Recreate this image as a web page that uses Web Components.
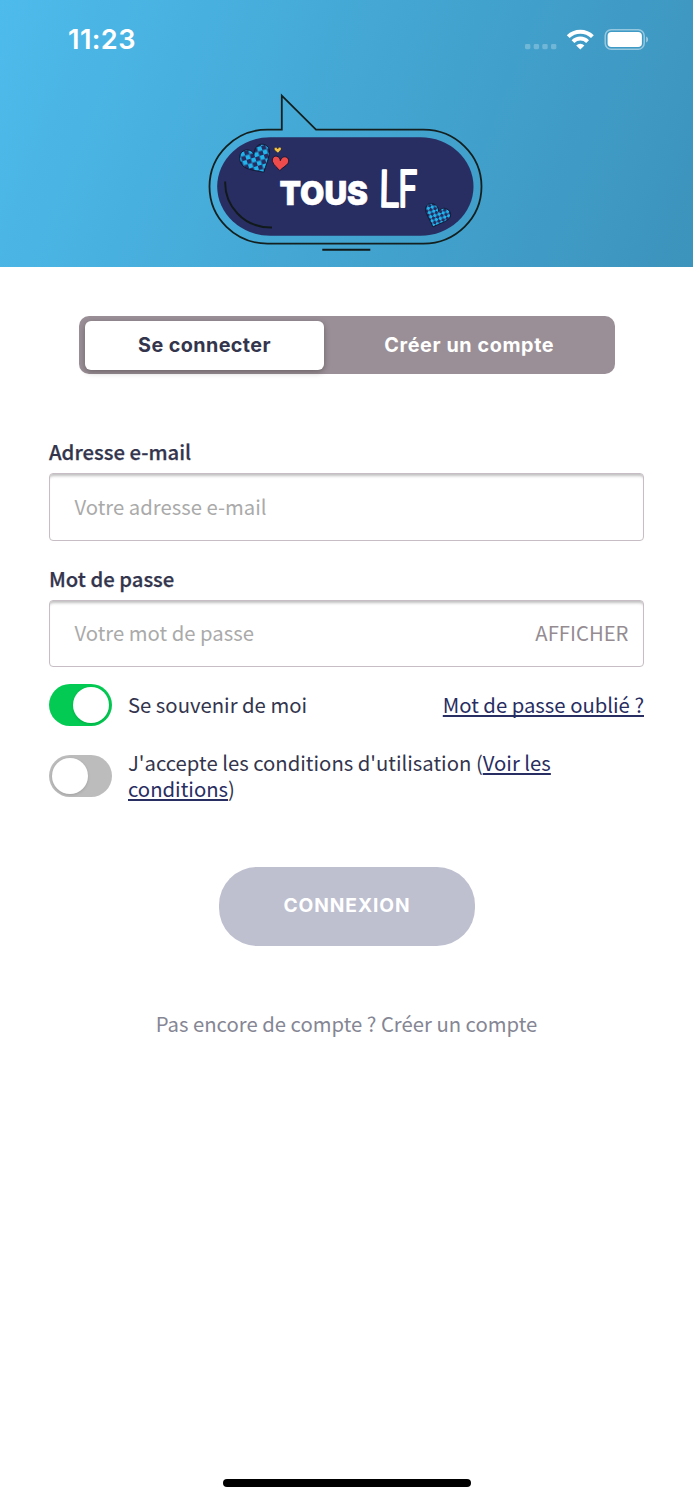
<!DOCTYPE html>
<html lang="fr">
<head>
<meta charset="utf-8">
<title>Tous LF</title>
<style>
body{margin:0;background:#fff;font-family:"Noto Sans CJK SC","Noto Sans",sans-serif;color:#33354d}
</style>
</head>
<body>
<login-screen></login-screen>
<script>
const define=(name,css,html)=>customElements.define(name,class extends HTMLElement{
  constructor(){
    super();
    this.attachShadow({mode:"open"}).innerHTML=`<style>*{box-sizing:border-box}${css}</style>${html}`;
  }
});

define("status-bar",`
:host{display:flex;justify-content:space-between;align-items:center;height:80px;padding:0 44px 0 68px;box-sizing:border-box;color:#fff}
time{font:600 27.200px/32px Inter,sans-serif;letter-spacing:.4px}
svg{display:block}`,
`<time>11:23</time>
<svg width="126" height="30" viewBox="523 25 126 30">
<g fill="#fff" fill-opacity=".25"><rect x="525" y="44" width="5.4" height="5.2" rx="1.4"/><rect x="533.7" y="44" width="5.4" height="5.2" rx="1.4"/><rect x="542.3" y="44" width="5.4" height="5.2" rx="1.4"/><rect x="551" y="44" width="5.4" height="5.2" rx="1.4"/></g>
<g fill="none" stroke="#fff" stroke-width="4"><path d="M568.2 36.6a17.3 17.3 0 0 1 24.2 0"/><path d="M573 41.6a10.4 10.4 0 0 1 14.6 0"/></g>
<path fill="#fff" d="M576.2 45.4a6.1 6.1 0 0 1 8.200 0l-4.100 4.200z"/>
<rect x="605.2" y="29.700" width="39" height="19.600" rx="6" fill="none" stroke="#fff" stroke-opacity=".45" stroke-width="1.500"/>
<rect x="607.6" y="32" width="34.300" height="15" rx="3.800" fill="#fff"/>
<path d="M646.2 36.600c2.400 1 2.400 5 0 6z" fill="#fff" fill-opacity=".5"/>
</svg>`);

define("brand-logo",`:host{display:block}svg{display:block}`,
`<svg width="290" height="172" viewBox="200 85 290 172">
<defs><pattern id="c" width="9" height="9" patternUnits="userSpaceOnUse" patternTransform="rotate(-17)"><rect width="9" height="9" fill="#20b4ec"/><path fill="#262b60" d="M0 0h4.500v4.500H0zM4.500 4.500H9V9H4.500z"/></pattern>
<pattern id="d" width="6.200" height="6.200" patternUnits="userSpaceOnUse" patternTransform="rotate(28)"><rect width="6.200" height="6.200" fill="#20b4ec"/><path fill="#262b60" d="M0 0h3.100v3.100H0zM3.100 3.100h3.100v3.100H3.100z"/></pattern></defs>
<rect x="217.200" y="137.200" width="256.300" height="98.600" rx="53" ry="49.300" fill="#282d62"/>
<path d="M281.800 129.600V95.600L316 129.600H423.500a58 57 0 0 1 0 114H267.500a58 57 0 0 1 0-114Z" fill="none" stroke="#13201f" stroke-width="1.800"/>
<path d="M225.200 181.500C224.500 205 243 228 272 227.500M322.300 249.800h48" fill="none" stroke="#111a1a" stroke-width="1.900"/>
<g stroke="#10142e" stroke-width=".9" stroke-linejoin="round">
<path fill="url(#c)" d="M264 172.200C256 170.500 247 170 243 166C237.500 160 239 152 245 150.200C249 149.200 252.500 151 254 154.300C254 149 257 144.200 262 144.200C267.500 144.200 270.500 149 269.300 154.500C268 161 265.500 166 264 172.200Z"/>
<path fill="url(#d)" d="M433 227C430 219.500 425.300 214 425.600 209C426 204.500 429.500 202.800 433 203.800C436.500 204.800 438.700 207.500 438.500 211.500C440.500 208.500 444 207.500 447 209C451 211 451.500 215.500 449.300 218.500C446 222 439 223.500 433 227Z"/>
<path fill="#ee4b4c" d="M279.800 170.700C277.500 167.500 273.500 165.500 272.500 161.500C271.800 158 274 155.800 276.500 156.200C279 156.700 280.200 158.300 280.300 160.700C281.300 158 283.500 156.200 286 157C288.800 158 289.300 161.300 287.800 163.600C286 166.300 282.500 167.500 279.800 170.700Z"/>
<path stroke-width=".4" fill="#f6c443" d="M278 153C276.600 151.300 274.200 150.600 274.200 148.700C274.300 147.200 277.200 147 277.700 149C278.500 146.600 281.200 147 281.200 148.800C281.200 150.700 279.200 151 278 153Z"/></g>
<text x="279.500" y="205.200" textLength="88.500" lengthAdjust="spacingAndGlyphs" font-family="Inter" font-weight="900" font-size="32.500" fill="#fff" stroke="#fff" stroke-width=".5">TOUS</text>
<g fill="#fff" stroke="#fff" stroke-width="1.900" stroke-linejoin="round" font-family="Noto Sans CJK SC" font-size="50">
<text transform="translate(378 206.700) rotate(1) scale(.78 1)">L</text><text transform="translate(397.500 207.200) scale(.72 1.020)">F</text></g>
</svg>`);

define("app-header",`
:host{display:flex;flex-direction:column;height:267px;background:linear-gradient(111deg,#4dbbec 0%,#44a7d4 48%,#3c93bc 100%)}
brand-logo{margin:5px 0 0 200px}`,
`<status-bar></status-bar><brand-logo></brand-logo>`);

define("segmented-control",`
:host{display:grid;grid-template-columns:239px 1fr;height:58px;padding:4.500px 0 4.500px 6.500px;box-sizing:border-box;background:#9a8f96;border-radius:10px;font:700 19.800px/49px Inter,sans-serif;text-align:center;color:#fff}
.on{background:#fff;color:#33354d;border-radius:6px;box-shadow:0 2px 6px rgba(0,0,0,.3);letter-spacing:.4px}
.off{letter-spacing:.6px}`,
`<div class="on"><slot name="on"></slot></div><div class="off"><slot name="off"></slot></div>`);

define("text-field",`
:host{display:block}
label{display:block;font-size:20.300px;line-height:26px;font-weight:500;margin-bottom:9px;-webkit-text-stroke:.25px}
.box{display:flex;justify-content:space-between;align-items:center;height:67.500px;padding:0 14.500px 2px 24.500px;border:1.500px solid #c6bec4;border-radius:4px;box-shadow:inset 0 4px 3px -2px rgba(0,0,0,.25);font-size:20.300px;line-height:30px;color:#aaa}
.act{color:#958c92}`,
`<label><slot name="label"></slot></label><div class="box"><slot></slot><span class="act"><slot name="action"></slot></span></div>`);

define("toggle-switch",`
:host{display:flex;flex:none;width:63px;height:42px;border-radius:21px;background:#bcbcbc;padding:3px;box-sizing:border-box}
:host([on]){background:#03ca52;justify-content:flex-end}
i{width:36px;height:36px;border-radius:50%;background:#fff;box-shadow:0 1px 3px rgba(0,0,0,.15)}`,`<i></i>`);

define("text-link",`:host{display:inline;color:#282d62;text-decoration:underline;text-decoration-thickness:1.500px;text-underline-offset:2px;text-decoration-skip-ink:none}`,`<slot></slot>`);

define("pill-button",`
:host{display:block;box-sizing:border-box;width:256px;height:79.500px;border-radius:38px;background:#bec0d0;color:#fff;text-align:center;font:700 19.200px/77px Inter,sans-serif;letter-spacing:.9px}`,`<slot></slot>`);

define("login-screen",`
:host{display:flex;flex-direction:column;height:1500px;background:#fff}
main{display:flex;flex-direction:column;padding:49px 49px 0;flex:1}
segmented-control{margin:0 29.500px 64px}
text-field+text-field{margin-top:24px}
.row{display:flex;align-items:center;font-size:20.300px;line-height:26px}
.row toggle-switch{margin-right:16px}
.r1{margin-top:17px}.r1 text-link{margin-left:auto}.r1 .rem,.r1 text-link{padding-bottom:2px}
.r2{margin-top:23px}
.terms{width:440px;padding-bottom:2px}
pill-button{margin:63.500px auto 0 170px}
.foot{margin-top:61.500px;text-align:center;font-size:20.300px;line-height:30px;color:#858694}
.home{width:248px;height:8px;border-radius:4px;background:#000;margin:0 auto 13px 223px}`,
`<app-header></app-header>
<main>
<segmented-control><span slot="on">Se connecter</span><span slot="off">Créer un compte</span></segmented-control>
<text-field><span slot="label">Adresse e-mail</span><span>Votre adresse e-mail</span></text-field>
<text-field><span slot="label">Mot de passe</span><span>Votre mot de passe</span><span slot="action">AFFICHER</span></text-field>
<div class="row r1"><toggle-switch on></toggle-switch><span class="rem">Se souvenir de moi</span><text-link>Mot de passe oublié ?</text-link></div>
<div class="row r2"><toggle-switch></toggle-switch><span class="terms">J'accepte les conditions d'utilisation (<text-link>Voir les conditions</text-link>)</span></div>
<pill-button>CONNEXION</pill-button>
<div class="foot">Pas encore de compte ? Créer un compte</div>
</main>
<div class="home"></div>`);
</script>
</body>
</html>
